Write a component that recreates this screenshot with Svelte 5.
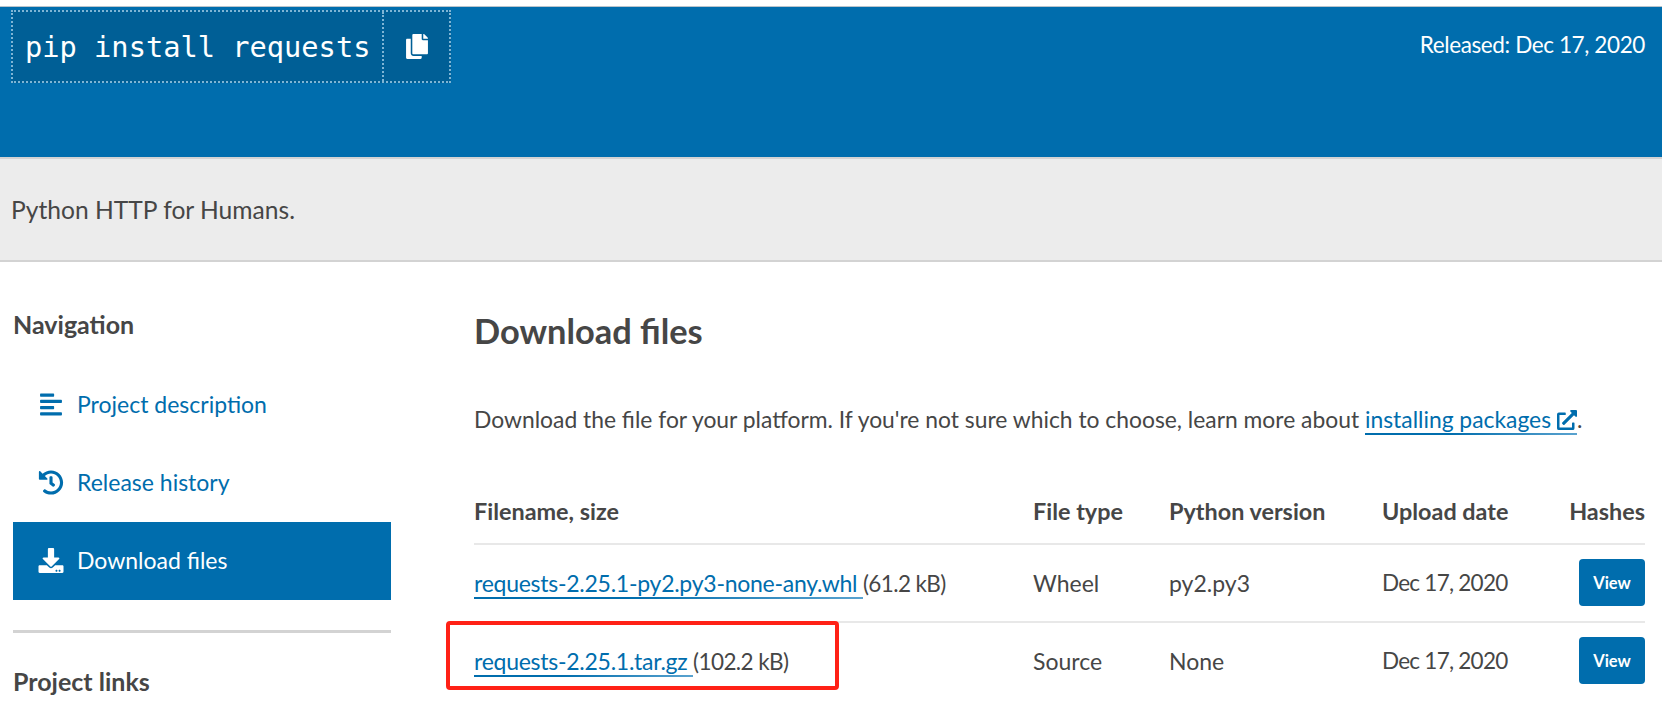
<script>
let rows = [
    { name: 'requests-2.25.1-py2.py3-none-any.whl', size: '61.2 kB', type: 'Wheel', python: 'py2.py3', date: 'Dec 17, 2020' },
    { name: 'requests-2.25.1.tar.gz', size: '102.2 kB', type: 'Source', python: 'None', date: 'Dec 17, 2020' }
]
</script>

<div class="page">
    <div class="banner">
        <div class="pip">
            <span class="pip-cmd">pip install requests</span>
            <button class="pip-copy" aria-label="Copy">
                <svg viewBox="0 0 448 512" width="22" height="25"><path fill="currentColor" d="M320 448v40c0 13.255-10.745 24-24 24H24c-13.255 0-24-10.745-24-24V120c0-13.255 10.745-24 24-24h72v296c0 30.879 25.121 56 56 56h168zm0-344V0H152c-13.255 0-24 10.745-24 24v368c0 13.255 10.745 24 24 24h272c13.255 0 24-10.745 24-24V128H344c-13.2 0-24-10.8-24-24zm120.971-31.029L375.029 7.029A24 24 0 0 0 358.059 0H352v96h96v-6.059a24 24 0 0 0-7.029-16.97z"/></svg>
            </button>
        </div>
        <div class="released">Released: Dec 17, 2020</div>
    </div>

    <div class="summary">Python HTTP for Humans.</div>

    <div class="content">
        <aside class="sidebar">
            <h3>Navigation</h3>
            <nav>
                <a class="nav-item" href="#description">
                    <svg viewBox="0 0 448 512" width="22" height="25"><path fill="currentColor" d="M12.83 352h262.34A12.82 12.82 0 0 0 288 339.17v-38.34A12.82 12.82 0 0 0 275.17 288H12.83A12.82 12.82 0 0 0 0 300.83v38.34A12.82 12.82 0 0 0 12.83 352zm0-256h262.34A12.82 12.82 0 0 0 288 83.17V44.83A12.82 12.82 0 0 0 275.17 32H12.83A12.82 12.82 0 0 0 0 44.83v38.34A12.82 12.82 0 0 0 12.83 96zM432 160H16a16 16 0 0 0-16 16v32a16 16 0 0 0 16 16h416a16 16 0 0 0 16-16v-32a16 16 0 0 0-16-16zm0 256H16a16 16 0 0 0-16 16v32a16 16 0 0 0 16 16h416a16 16 0 0 0 16-16v-32a16 16 0 0 0-16-16z"/></svg>
                    Project description
                </a>
                <a class="nav-item" href="#history">
                    <svg viewBox="0 0 512 512" width="25" height="25"><path fill="currentColor" d="M504 255.531c.253 136.64-111.18 248.372-247.82 248.468-59.015.042-113.223-20.53-155.822-54.911-11.077-8.94-11.905-25.541-1.839-35.607l11.267-11.267c8.609-8.609 22.353-9.551 31.891-1.984C173.062 425.135 212.781 440 256 440c101.705 0 184-82.311 184-184 0-101.705-82.311-184-184-184-48.814 0-93.149 18.969-126.068 49.932l50.754 50.754c10.08 10.08 2.941 27.314-11.313 27.314H24c-8.837 0-16-7.163-16-16V38.627c0-14.254 17.234-21.393 27.314-11.314l49.372 49.372C129.209 34.136 189.552 8 256 8c136.81 0 247.747 110.78 248 247.531zm-180.912 78.784l9.823-12.63c8.138-10.463 6.253-25.542-4.21-33.679L288 256.349V152c0-13.255-10.745-24-24-24h-16c-13.255 0-24 10.745-24 24v135.651l65.409 50.874c10.463 8.137 25.541 6.253 33.679-4.21z"/></svg>
                    Release history
                </a>
                <a class="nav-item active" href="#files">
                    <svg viewBox="0 0 512 512" width="25" height="25"><path fill="currentColor" d="M216 0h80c13.3 0 24 10.7 24 24v168h87.7c17.8 0 26.7 21.5 14.1 34.1L269.7 378.3c-7.5 7.5-19.8 7.5-27.3 0L90.1 226.1c-12.6-12.6-3.7-34.1 14.1-34.1H192V24c0-13.3 10.7-24 24-24zm296 376v112c0 13.3-10.7 24-24 24H24c-13.3 0-24-10.7-24-24V376c0-13.3 10.7-24 24-24h146.7l49 49c20.1 20.1 52.5 20.1 72.6 0l49-49H488c13.3 0 24 10.7 24 24zm-124 88c0-11-9-20-20-20s-20 9-20 20 9 20 20 20 20-9 20-20zm64 0c0-11-9-20-20-20s-20 9-20 20 9 20 20 20 20-9 20-20z"/></svg>
                    Download files
                </a>
            </nav>
            <hr />
            <h3>Project links</h3>
        </aside>

        <main class="files">
            <h2>Download files</h2>
            <p class="intro">
                Download the file for your platform. If you're not sure which to choose, learn more about
                <a href="#packages">installing packages <svg viewBox="0 0 512 512" width="20" height="20"><path fill="currentColor" d="M432 320h-32a16 16 0 0 0-16 16v112H64V128h144a16 16 0 0 0 16-16V80a16 16 0 0 0-16-16H48a48 48 0 0 0-48 48v352a48 48 0 0 0 48 48h352a48 48 0 0 0 48-48V336a16 16 0 0 0-16-16zM488 0H360c-21.37 0-32.05 25.91-17 41l35.73 35.73L135 320.37a24 24 0 0 0 0 34L157.67 377a24 24 0 0 0 34 0l243.61-243.68L471 169c15 15 41 4.5 41-17V24a24 24 0 0 0-24-24z"/></svg></a>.
            </p>
            <div class="table">
                <div class="row head">
                    <div>Filename, size</div>
                    <div>File type</div>
                    <div>Python version</div>
                    <div>Upload date</div>
                    <div class="right">Hashes</div>
                </div>
                {#each rows as row}
                <div class="row">
                    <div class="file"><a href="#file">{row.name}&nbsp;</a><span class="size">({row.size})</span></div>
                    <div>{row.type}</div>
                    <div>{row.python}</div>
                    <div class="date">{row.date}</div>
                    <div class="right"><button class="view">View</button></div>
                </div>
                {/each}
            </div>
            <div class="highlight"></div>
        </main>
    </div>
</div>

<style>
:global(body) {
    background: #fff;
}
.page {
    height: 707px;
    overflow: hidden;
    padding-top: 6px;
    box-sizing: border-box;
    font-family: Lato, "Noto Sans", sans-serif;
    font-size: 23px;
    color: #464646;
}
.banner {
    height: 151px;
    box-sizing: border-box;
    border-top: 1px solid #b9c4cc;
    background: #006dad;
    color: #fff;
    display: flex;
    justify-content: space-between;
    align-items: flex-start;
    padding: 3px 17px 0 11px;
}
.pip {
    display: flex;
    height: 73px;
    background: #005f96;
    border: 2px dotted #7fb5d5;
    box-sizing: border-box;
}
.pip-cmd {
    font-family: "DejaVu Sans Mono", "Liberation Mono", monospace;
    font-size: 28.7px;
    line-height: 70px;
    padding: 0 12px;
}
.pip-copy {
    width: 67px;
    border: 0;
    border-left: 2px dotted #7fb5d5;
    background: none;
    color: #fff;
    display: flex;
    align-items: center;
    justify-content: center;
    padding: 0;
}
.released {
    margin-top: 20px;
    line-height: 30px;
    font-size: 22.5px;
    letter-spacing: -0.39px;
}
.summary {
    height: 105px;
    box-sizing: border-box;
    background: #ececec;
    border-top: 2px solid #d3d3d3;
    border-bottom: 2px solid #d3d3d3;
    padding-left: 11px;
    line-height: 101px;
    font-size: 24.6px;
}
.content {
    display: grid;
    grid-template-columns: 378px 1fr;
    gap: 83px;
    padding: 0 17px 0 13px;
}
h3 {
    margin: 0;
    font-size: 25px;
    font-weight: 700;
    line-height: 30px;
}
.sidebar h3:first-child {
    margin-top: 47px;
}
nav {
    margin-top: 27px;
    display: flex;
    flex-direction: column;
}
.nav-item {
    height: 78px;
    box-sizing: border-box;
    display: flex;
    align-items: center;
    padding: 0 0 2px 25px;
    color: #006dad;
    text-decoration: none;
}
.nav-item svg {
    width: 26px;
    margin-right: 13px;
    flex: none;
}
.nav-item.active {
    background: #006dad;
    color: #fff;
}
hr {
    margin: 30px 0 0;
    border: 0;
    height: 3px;
    background: #d3d3d3;
}
.sidebar hr + h3 {
    margin-top: 33px;
}
.files {
    position: relative;
}
h2 {
    margin: 48px 0 0;
    font-size: 34.4px;
    font-weight: 700;
    line-height: 42px;
}
.intro {
    margin: 51px 0 0;
    line-height: 32px;
    font-size: 22.85px;
}
.intro a, .file a {
    color: #006dad;
    text-decoration: none;
    border-bottom: 2px solid;
    border-image: linear-gradient(90deg, #006dad 40%, #5ba3cf) 1;
}
.intro svg {
    vertical-align: -2px;
}
.table {
    margin-top: 48px;
}
.row {
    display: grid;
    grid-template-columns: 559px 136px 213px 1fr auto;
    align-items: center;
    height: 78px;
    border-bottom: 2px solid #e8e8e8;
    box-sizing: border-box;
    padding-bottom: 1px;
}
.row:last-child {
    border-bottom-color: transparent;
}
.row.head {
    height: 62px;
    font-weight: 700;
    font-size: 23.4px;
    align-items: start;
    padding-top: 14px;
}
.file a {
    letter-spacing: -0.26px;
}
.size {
    font-size: 22.5px;
    letter-spacing: -0.6px;
}
.date {
    font-size: 22.5px;
    letter-spacing: -0.75px;
}
.right {
    text-align: right;
}
.view {
    width: 66px;
    height: 47px;
    border: 0;
    border-radius: 4px;
    background: #006dad;
    color: #fff;
    font-family: inherit;
    font-size: 16.5px;
    font-weight: 700;
}
.highlight {
    position: absolute;
    left: -28px;
    top: 359px;
    width: 393px;
    height: 69px;
    box-sizing: border-box;
    border: 4px solid #ff2116;
    border-radius: 4px;
}
</style>
